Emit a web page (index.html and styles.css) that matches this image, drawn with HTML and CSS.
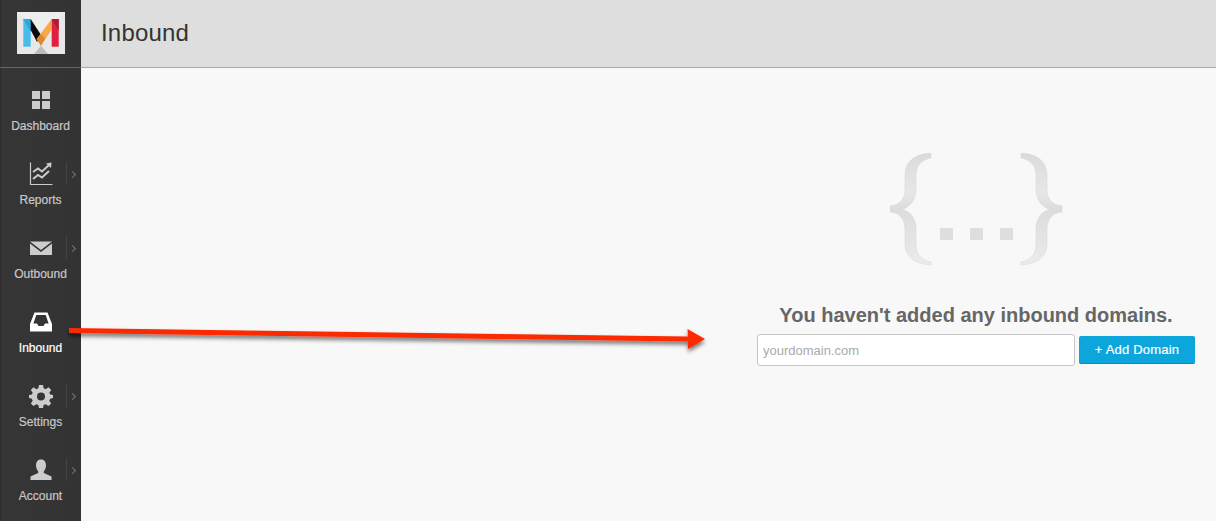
FILE: index.html
```html
<!DOCTYPE html>
<html lang="en">
<head>
<meta charset="utf-8">
<title>Inbound</title>
<link rel="stylesheet" href="styles.css">
</head>
<body>
<div class="app">
  <aside class="sidebar">
    <div class="brand">
      <svg class="logo" viewBox="0 0 48 42" width="48" height="42">
        <rect width="48" height="42" fill="#e8e8e8"/>
        <path d="M0 0L24 21L48 0z" fill="#eeeeee"/>
        <path d="M17 42L24 33.700L31 42z" fill="#bdbdbd"/>
        <path d="M6.300 7H13.700V34.700H6.300z" fill="#45bde8"/>
        <path d="M6.300 7H13.700V20z" fill="#2fa6d8"/>
        <path d="M13.700 7L24.700 24L20 30L13.700 18z" fill="#0c0c0c"/>
        <path d="M34.700 7L19.700 27L24 33.700L34.700 17.500z" fill="#f6a84a"/>
        <path d="M19.700 27L24 22L28.200 26.500L24 33.700z" fill="#d98b2f"/>
        <path d="M34.700 7H41.700V34.700H34.700z" fill="#e11f3f"/>
        <path d="M41.700 7V19L34.700 7z" fill="#a81f35"/>
      </svg>
    </div>
    <nav class="nav">
      <a class="nav-item">
        <svg class="nav-icon" viewBox="0 0 24 24" width="24" height="24"><path d="M3 3h8v8H3zM13 3h8v8h-8zM3 13h8v8H3zM13 13h8v8h-8z" fill="#ccc"/></svg>
        <span class="nav-label">Dashboard</span>
      </a>
      <a class="nav-item has-sub">
        <svg class="nav-icon" viewBox="0 0 24 24" width="24" height="24"><path d="M1.500 0.500V22.500H23.500" fill="none" stroke="#ccc" stroke-width="1.200"/><path d="M4 10L9 6.500L13 9.500L20 3M4 17L9 13L13 15.500L20 9" fill="none" stroke="#ccc" stroke-width="2"/><path d="M17 1.500L22.500 0.500L22 6z" fill="#ccc"/></svg>
        <span class="nav-label">Reports</span>
        <span class="sub-mark"></span>
      </a>
      <a class="nav-item has-sub">
        <svg class="nav-icon" viewBox="0 0 24 24" width="24" height="24"><path d="M1 5.500H23L12 14z" fill="#ccc"/><path d="M1 7.500V19H23V7.500L12 16z" fill="#ccc"/></svg>
        <span class="nav-label">Outbound</span>
        <span class="sub-mark"></span>
      </a>
      <a class="nav-item active">
        <svg class="nav-icon" viewBox="0 0 24 24" width="24" height="24"><path fill-rule="evenodd" d="M5.500 2.500H18.500L23 14V21.500H1V14zM7.300 5L4.400 13.500H8L9.500 16H14.500L16 13.500H19.600L16.700 5z" fill="#fff"/></svg>
        <span class="nav-label">Inbound</span>
      </a>
      <a class="nav-item has-sub">
        <svg class="nav-icon" viewBox="0 0 24 24" width="24" height="24"><path fill-rule="evenodd" d="M10 1H14L14.600 4.300L16.700 5.200L19.500 3.300L22.200 6L20.300 8.800L21.200 10.600L24 11V14L21.200 14.700L20.300 16.700L22.200 19.500L19.500 22L16.700 20.300L14.600 21.100L14 24H10L9.400 21.100L7.300 20.300L4.500 22L1.800 19.500L3.700 16.700L2.800 14.700L0 14V11L2.800 10.600L3.700 8.800L1.800 6L4.500 3.300L7.300 5.200L9.400 4.300zM12 8.500A4 4 0 1 0 12 16.500A4 4 0 1 0 12 8.500z" fill="#ccc"/></svg>
        <span class="nav-label">Settings</span>
        <span class="sub-mark"></span>
      </a>
      <a class="nav-item has-sub">
        <svg class="nav-icon" viewBox="0 0 24 24" width="24" height="24"><path d="M12 1.500C15.500 1.500 17 4.200 17 7.500C17 10 16 12 14.800 13.300V15L22.500 18.500V22H1.500V18.500L9.200 15V13.300C8 12 7 10 7 7.500C7 4.200 8.500 1.500 12 1.500z" fill="#ccc"/></svg>
        <span class="nav-label">Account</span>
        <span class="sub-mark"></span>
      </a>
    </nav>
  </aside>
  <div class="main">
    <header class="topbar"><h1 class="title">Inbound</h1></header>
    <section class="content">
      <div class="empty">
        <svg class="braces" viewBox="0 0 174 114" width="174" height="114">
          <defs>
            <linearGradient id="brace" x1="0" y1="0" x2="0" y2="1">
              <stop offset="0" stop-color="#dadada"/>
              <stop offset="0.35" stop-color="#e7e7e7"/>
              <stop offset="0.5" stop-color="#dcdcdc"/>
              <stop offset="1" stop-color="#ebebeb"/>
            </linearGradient>
          </defs>
          <path d="M41 0V5C32 7 27 11 26 21V38C25 49 19 54 12 56.500C19 58 25 63 26 74V93C27 103 32 107 41 109V112C26 111 16 105 15 92V77C15 65 9 60 0 59V53C9 52 15 47 15 36V21C16 7 26 1 41 0z" fill="url(#brace)" stroke="#d4d4d4" stroke-width="0.500"/>
          <path d="M131 0V5C140 7 145 11 146 21V38C147 49 153 54 160 56.500C153 58 147 63 146 74V93C145 103 140 107 131 109V112C146 111 156 105 157 92V77C157 65 163 60 172 59V53C163 52 157 47 157 36V21C156 7 146 1 131 0z" fill="url(#brace)" stroke="#d4d4d4" stroke-width="0.500"/>
          <path d="M50 75h13v12H50zM80 75h13v12H80zM110 75h13v12H110z" fill="#dedede"/>
        </svg>
        <h2 class="empty-title">You haven't added any inbound domains.</h2>
        <form class="domain-form">
          <input class="domain-input" type="text" placeholder="yourdomain.com">
          <button class="domain-btn" type="button">+ Add Domain</button>
        </form>
      </div>
    </section>
  </div>
</div>
<svg class="arrow" viewBox="0 0 660 40" width="660" height="40">
  <defs>
    <filter id="shadow" x="-5%" y="-80%" width="110%" height="300%">
      <feDropShadow dx="0" dy="3" stdDeviation="2" flood-color="#000" flood-opacity="0.550"/>
    </filter>
  </defs>
  <path d="M9 8L628 16.500L627.500 9L645 19L628 29L628 21.500L9 13z" fill="#fb2a05" filter="url(#shadow)"/>
</svg>
</body>
</html>
```
FILE: styles.css
```css
* { box-sizing: border-box; }
html, body { margin: 0; height: 100%; overflow: hidden; }
body { font-family: "Liberation Sans", Arial, sans-serif; background: #f8f8f8; position: relative; }
.app { display: flex; height: 521px; }
.sidebar { width: 81px; flex: none; background: linear-gradient(90deg, #2a2a2a 0, #363636 2px, #333 100%); display: flex; flex-direction: column; }
.brand { height: 68px; flex: none; display: flex; align-items: flex-start; justify-content: center; padding-top: 12px; border-bottom: 1px solid #666; }
.logo { display: block; }
.nav { display: flex; flex-direction: column; padding-top: 20px; }
.nav-item { position: relative; display: flex; flex-direction: column; align-items: center; height: 74px; color: #c8c8c8; }
.nav-icon { display: block; height: 24px; }
.nav-label { font-size: 12px; line-height: 14px; margin-top: 7px; -webkit-text-stroke: 0.2px currentColor; }
.active { color: #fff; }
.sub-mark { position: absolute; left: 66px; top: 0; width: 15px; height: 23px; border-left: 1px solid #444; }
.sub-mark::after { content: ""; position: absolute; left: 3px; top: 10px; width: 4px; height: 4px; border-top: 1px solid #777; border-right: 1px solid #777; transform: rotate(45deg); }
.main { flex: 1; display: flex; flex-direction: column; min-width: 0; }
.topbar { height: 68px; flex: none; background: #dedede; border-bottom: 1px solid #aaa; display: flex; align-items: center; padding-left: 20px; }
.title { margin: 0; font-weight: 400; font-size: 24px; color: #333; letter-spacing: 0.2px; position: relative; top: -1px; }
.content { flex: 1; display: flex; justify-content: flex-end; padding: 85px 21px 0 0; }
.empty { width: 438px; display: flex; flex-direction: column; align-items: center; }
.braces { display: block; margin-left: 2px; }
.empty-title { margin: 36px 0 0; font-size: 20px; line-height: 24px; font-weight: 700; color: #666; white-space: nowrap; }
.domain-form { display: flex; align-items: center; justify-content: space-between; width: 100%; margin-top: 7px; }
.domain-input { width: 318px; height: 32px; padding: 0 5px; border: 1px solid #c6c6c6; border-radius: 3px; background: #fff; font: 13px "Liberation Sans", Arial, sans-serif; color: #555; }
.domain-input::placeholder { color: #aaa; opacity: 1; }
.domain-btn { width: 116px; height: 28px; padding: 0; border: 0; border-bottom: 1px solid #0a8fbc; border-radius: 2px; background: #0ca6dc; color: #fff; font: 13px "Liberation Sans", Arial, sans-serif; letter-spacing: 0.2px; -webkit-text-stroke: 0.2px currentColor; }
.arrow { position: absolute; left: 60px; top: 320px; display: block; pointer-events: none; }
```
